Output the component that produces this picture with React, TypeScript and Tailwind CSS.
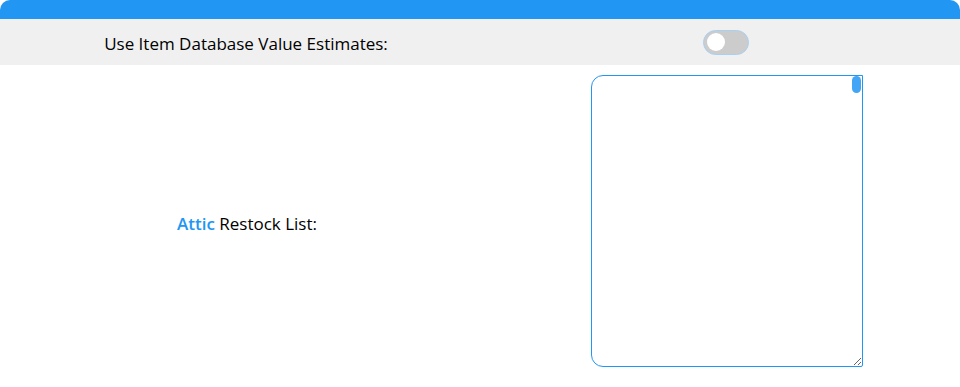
export default function App() {
  return (
    <div className="w-[960px] h-[387px] bg-white overflow-hidden font-['Open_Sans',sans-serif] text-[17px] text-black">
      <div className="h-[19px] bg-[#2196f3] rounded-t-[10px]" />

      {/* toggle row */}
      <div className="h-[46px] bg-[#f0f0f0] grid grid-cols-2 items-center">
        <div className="text-center pl-[12px] pt-[3px]">Use Item Database Value Estimates:</div>
        <div className="flex justify-center pl-[12px]">
          <div className="w-[46px] h-[25px] rounded-full bg-[#cccccc] border border-[#a8d0f2] flex items-center px-[3px]">
            <div className="w-[18px] h-[18px] rounded-full bg-white" />
          </div>
        </div>
      </div>

      {/* restock list row */}
      <div className="grid grid-cols-2 items-center py-[10px]">
        <div className="text-center pl-[14px] pt-[6px]">
          <span className="text-[#2196f3] font-semibold">Attic</span> Restock List:
        </div>
        <div className="flex justify-center pl-[14px]">
          <div className="relative">
            <textarea className="block w-[272px] h-[292px] border border-[#2196f3] rounded-l-[12px] rounded-br-[2px] outline-none resize" />
            <div className="absolute right-[2px] top-[1px] w-[9px] h-[17px] rounded-[5px] bg-[#42a5f5]" />
          </div>
        </div>
      </div>
    </div>
  );
}
